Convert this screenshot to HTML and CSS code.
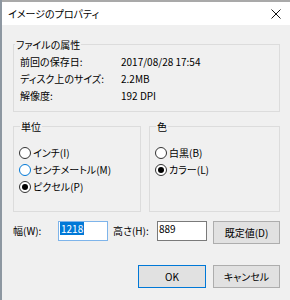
FILE: index.html
```html
<!DOCTYPE html>
<html>
<head>
    <meta charset="UTF-8">
    <title>イメージのプロパティ</title>
    <link rel="stylesheet" href="styles.css">
</head>
<body>
    <div class="window">
        <div class="titlebar">
            <span class="title">イメージのプロパティ</span>
            <svg class="close" width="10" height="10" viewBox="0 0 10 10">
                <path d="M0.5 0.5 L9.5 9.5 M9.5 0.5 L0.5 9.5" stroke="#111" stroke-width="1" fill="none"/>
            </svg>
        </div>
        <div class="content">
            <fieldset class="group attrs">
                <legend>ファイルの属性</legend>
                <div class="attr-grid">
                    <span>前回の保存日:</span><span>2017/08/28 17:54</span>
                    <span>ディスク上のサイズ:</span><span>2.2MB</span>
                    <span>解像度:</span><span>192 DPI</span>
                </div>
            </fieldset>

            <div class="options">
                <fieldset class="group units">
                    <legend>単位</legend>
                    <div class="radio"><span class="mark"></span>インチ(I)</div>
                    <div class="radio"><span class="mark hover"></span>センチメートル(M)</div>
                    <div class="radio"><span class="mark checked"></span>ピクセル(P)</div>
                </fieldset>
                <fieldset class="group colors">
                    <legend>色</legend>
                    <div class="radio"><span class="mark"></span>白黒(B)</div>
                    <div class="radio"><span class="mark checked"></span>カラー(L)</div>
                </fieldset>
            </div>

            <div class="size-row">
                <span class="size-label">幅(W):</span>
                <div class="field focus"><span class="selected">1218</span></div>
                <span class="size-label second">高さ(H):</span>
                <div class="field"><span>889</span></div>
                <button class="btn defaults">既定値(D)</button>
            </div>

            <div class="actions">
                <button class="btn primary">OK</button>
                <button class="btn">キャンセル</button>
            </div>
        </div>
    </div>
</body>
</html>
```

FILE: styles.css
```css
body {
    margin: 0;
    font-family: "Noto Sans CJK JP", "Noto Sans", sans-serif;
    font-size: 10px;
    font-feature-settings: "palt";
    color: #000;
    background-color: #f0f0f0;
}
.window {
    width: 290px;
    height: 300px;
    box-sizing: border-box;
    border-left: 2px solid #8d97a1;
    background-color: #f0f0f0;
}
.titlebar {
    height: 25px;
    box-sizing: border-box;
    border-top: 2px solid #a9a9a9;
    background-color: #fff;
    display: flex;
    align-items: center;
    justify-content: space-between;
    padding: 0 9px 0 6px;
}
.close {
    display: block;
}
.content {
    padding: 11px 10px 0 11px;
}
.group {
    margin: 0;
    padding: 0;
    min-width: 0;
    box-sizing: border-box;
    border: 1px solid #dcdcdc;
}
.group legend {
    padding: 0 1px;
    margin-left: 1px;
    line-height: 17px;
}
.attrs {
    padding-bottom: 7px;
}
.attr-grid {
    display: grid;
    grid-template-columns: 101px 1fr;
    padding-left: 6px;
    line-height: 17px;
}
.options {
    display: flex;
    gap: 8px;
    margin-top: 6px;
}
.options .group {
    padding: 9px 0 16px 5px;
}
.units {
    width: 128px;
}
.colors {
    flex: 1;
}
.radio {
    display: flex;
    align-items: center;
    line-height: 17px;
}
.mark {
    width: 12px;
    height: 12px;
    box-sizing: border-box;
    border: 1px solid #333;
    border-radius: 50%;
    background-color: #fff;
    margin-right: 2px;
    display: flex;
    align-items: center;
    justify-content: center;
}
.mark.hover {
    border-color: #0078d7;
}
.mark.checked::after {
    content: "";
    width: 6px;
    height: 6px;
    border-radius: 50%;
    background-color: #000;
}
.size-row {
    display: flex;
    align-items: flex-start;
    margin-top: 9px;
}
.size-label {
    width: 45px;
    line-height: 20px;
}
.size-label.second {
    width: 44px;
    margin-left: 5px;
}
.field {
    width: 50px;
    height: 20px;
    box-sizing: border-box;
    border: 1px solid #7a7a7a;
    background-color: #fff;
    padding: 0 1px;
    line-height: 13px;
}
.field.focus {
    border-color: #7eb4ea;
}
.field .selected {
    display: inline-block;
    background-color: #0078d7;
    color: #fff;
    padding: 0 1px;
}
.btn {
    height: 23px;
    box-sizing: border-box;
    border: 1px solid #adadad;
    background-color: #e1e1e1;
    font: inherit;
    color: #000;
    padding: 0;
    display: flex;
    align-items: center;
    justify-content: center;
}
.btn.primary {
    border-color: #0078d7;
}
.defaults {
    width: 67px;
    margin-left: 6px;
}
.actions {
    display: flex;
    justify-content: flex-end;
    gap: 7px;
    margin-top: 21px;
}
.actions .btn {
    width: 67px;
}
.actions .btn.primary {
    width: 68px;
}
```
